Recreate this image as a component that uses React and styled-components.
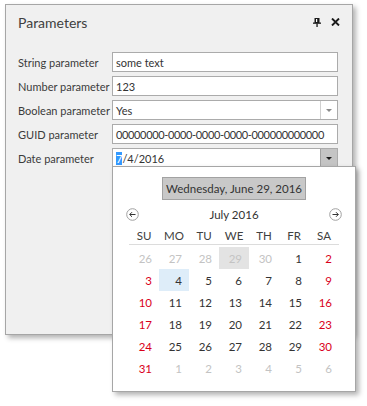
import React from "react";
import styled, { createGlobalStyle } from "styled-components";

const GlobalStyle = createGlobalStyle`
  html, body {
    margin: 0;
    background: #ffffff;
  }
  body {
    font-family: Lato, "Open Sans", sans-serif;
    font-size: 11px;
    color: #3b3b3b;
  }
`;

const Page = styled.div`
  box-sizing: border-box;
  width: 367px;
  height: 406px;
  padding: 4px 0 0 5px;
`;

const Panel = styled.div`
  box-sizing: border-box;
  width: 348px;
  height: 331px;
  border: 1px solid #a6a6a6;
  background: #f0f0f0;
  box-shadow: 3px 3px 5px rgba(0, 0, 0, 0.3);
`;

const Header = styled.div`
  height: 34px;
  display: flex;
  align-items: center;
  padding: 0 12px 0 12px;
`;

const Title = styled.div`
  flex: 1;
  font-size: 14px;
  color: #404040;
`;

const HeaderButtons = styled.div`
  display: flex;
  align-items: center;
  gap: 10px;
  svg {
    display: block;
  }
`;

const Form = styled.div`
  display: grid;
  grid-template-columns: 94px 226px;
  row-gap: 4px;
  padding: 13px 0 0 12px;
`;

const Label = styled.div`
  height: 20px;
  display: flex;
  align-items: center;
  white-space: nowrap;
`;

const Field = styled.div`
  position: relative;
  box-sizing: border-box;
  height: 20px;
  border: 1px solid #ababab;
  background: #ffffff;
  display: flex;
  align-items: center;
`;

const FieldText = styled.div`
  flex: 1;
  padding-left: 3px;
  white-space: nowrap;
  color: #333;
  letter-spacing: ${(p) => (p.$tight ? "-0.35px" : "normal")};
`;

const Selected = styled.span`
  background: #3399ff;
  color: #ffffff;
`;

const DropButton = styled.div`
  width: 16px;
  align-self: stretch;
  border-left: 1px solid ${(p) => (p.$pressed ? "#a0a0a0" : "#d0d0d0")};
  background: ${(p) => (p.$pressed ? "#c4c4c4" : "#ffffff")};
  display: flex;
  align-items: center;
  justify-content: center;
`;

const Arrow = styled.div`
  width: 0;
  height: 0;
  border-left: 3px solid transparent;
  border-right: 3px solid transparent;
  border-top: 3px solid ${(p) => (p.$dark ? "#1a1a1a" : "#8a8a8a")};
`;

const Popup = styled.div`
  position: absolute;
  top: calc(100% - 1px);
  left: -1px;
  box-sizing: border-box;
  width: 244px;
  height: 226px;
  border: 1px solid #a6a6a6;
  background: #ffffff;
  box-shadow: 3px 3px 5px rgba(0, 0, 0, 0.3);
  padding-top: 10px;
  font-size: 11.5px;
  z-index: 2;
`;

const TodayButton = styled.div`
  box-sizing: border-box;
  width: 144px;
  height: 23px;
  margin: 0 auto;
  border: 1px solid #a2a2a2;
  background: #c8c8c8;
  display: flex;
  align-items: center;
  justify-content: center;
  white-space: nowrap;
  color: #333;
`;

const NavRow = styled.div`
  height: 16px;
  margin-top: 6px;
  padding: 0 13px;
  display: flex;
  align-items: center;
  justify-content: space-between;
  svg {
    display: block;
  }
`;

const Month = styled.div`
  color: #333;
`;

const Calendar = styled.div`
  padding: 0 16px;
`;

const WeekDays = styled.div`
  display: grid;
  grid-template-columns: repeat(7, 30px);
  height: 18px;
  margin-top: 4px;
  border-bottom: 1px solid #dcdcdc;
  align-items: center;
  text-align: center;
  color: #404040;
`;

const Days = styled.div`
  display: grid;
  grid-template-columns: repeat(7, 30px);
  grid-auto-rows: 22px;
  margin-top: 2px;
`;

const Day = styled.div`
  display: flex;
  align-items: center;
  justify-content: flex-end;
  padding-right: 7px;
  color: ${(p) =>
    p.$other ? "#c3c3c3" : p.$weekend ? "#d9001a" : "#333333"};
  background: ${(p) =>
    p.$today ? "#e3e3e3" : p.$selected ? "#deedf9" : "transparent"};
`;

const PinIcon = () => (
  <svg width="8" height="9" viewBox="0 0 8 9">
    <rect x="1.5" y="0" width="5" height="5" fill="#1a1a1a" />
    <rect x="3" y="1" width="1.2" height="3" fill="#ffffff" />
    <rect x="0" y="4.5" width="8" height="1.3" fill="#1a1a1a" />
    <rect x="3.4" y="5.5" width="1.3" height="3.5" fill="#1a1a1a" />
  </svg>
);

const CloseIcon = () => (
  <svg width="9" height="8" viewBox="0 0 9 8">
    <path d="M1 0.5 L8 7.5 M8 0.5 L1 7.5" stroke="#1a1a1a" strokeWidth="1.9" />
  </svg>
);

const NavArrow = ({ dir }) => (
  <svg width="13" height="13" viewBox="0 0 13 13">
    <circle cx="6.5" cy="6.5" r="5.8" fill="#ffffff" stroke="#a0a0a0" />
    {dir === "left" ? (
      <path d="M9.5 6.5 H3.8 M6 4.2 L3.7 6.5 L6 8.8" fill="none" stroke="#333" strokeWidth="1" />
    ) : (
      <path d="M3.5 6.5 H9.2 M7 4.2 L9.3 6.5 L7 8.8" fill="none" stroke="#333" strokeWidth="1" />
    )}
  </svg>
);

const weekDays = ["SU", "MO", "TU", "WE", "TH", "FR", "SA"];

const buildDays = () => {
  const list = [];
  [26, 27, 28, 29, 30].forEach((d) => list.push({ d, other: true, today: d === 29 }));
  for (let d = 1; d <= 31; d++) list.push({ d, selected: d === 4 });
  [1, 2, 3, 4, 5, 6].forEach((d) => list.push({ d, other: true }));
  return list;
};

const params = [
  { label: "String parameter", value: "some text" },
  { label: "Number parameter", value: "123" },
  { label: "Boolean parameter", value: "Yes", combo: true },
  { label: "GUID parameter", value: "00000000-0000-0000-0000-000000000000", tight: true },
];

export default function App() {
  const days = buildDays();
  return (
    <Page>
      <GlobalStyle />
      <Panel>
        <Header>
          <Title>Parameters</Title>
          <HeaderButtons>
            <PinIcon />
            <CloseIcon />
          </HeaderButtons>
        </Header>
        <Form>
          {params.map((p) => (
            <React.Fragment key={p.label}>
              <Label>{p.label}</Label>
              <Field>
                <FieldText $tight={p.tight}>{p.value}</FieldText>
                {p.combo && (
                  <DropButton>
                    <Arrow />
                  </DropButton>
                )}
              </Field>
            </React.Fragment>
          ))}
          <Label>Date parameter</Label>
          <Field>
            <FieldText>
              <Selected>7</Selected>/4/2016
            </FieldText>
            <DropButton $pressed>
              <Arrow $dark />
            </DropButton>
            <Popup>
              <TodayButton>Wednesday, June 29, 2016</TodayButton>
              <NavRow>
                <NavArrow dir="left" />
                <Month>July 2016</Month>
                <NavArrow dir="right" />
              </NavRow>
              <Calendar>
                <WeekDays>
                  {weekDays.map((w) => (
                    <div key={w}>{w}</div>
                  ))}
                </WeekDays>
                <Days>
                  {days.map((day, i) => (
                    <Day
                      key={i}
                      $other={day.other}
                      $weekend={i % 7 === 0 || i % 7 === 6}
                      $today={day.today}
                      $selected={day.selected}
                    >
                      {day.d}
                    </Day>
                  ))}
                </Days>
              </Calendar>
            </Popup>
          </Field>
        </Form>
      </Panel>
    </Page>
  );
}
